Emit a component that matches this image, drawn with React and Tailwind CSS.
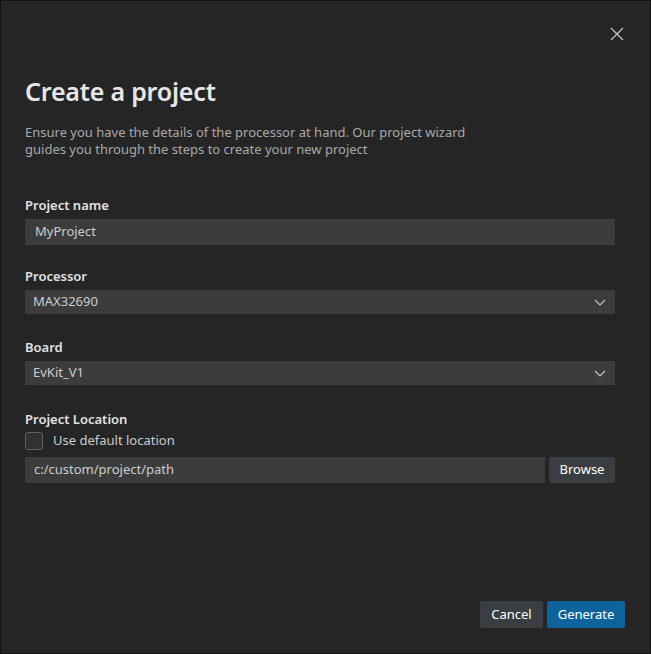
import React from 'react';

const font = { fontFamily: '"Segoe UI", "Noto Sans", "Open Sans", sans-serif' };

function Chevron() {
    return (
        <svg width="12" height="7" viewBox="0 0 12 7" fill="none" className="shrink-0">
            <path d="M1 1l5 5 5-5" stroke="#c5c5c5" strokeWidth="1.2" />
        </svg>
    );
}

function Field({ label, className, children }) {
    return (
        <div className={'flex flex-col ' + (className || '')}>
            <label className="text-[13px] font-semibold text-[#e2e2e2] leading-[18px] mb-[5px]">{label}</label>
            {children}
        </div>
    );
}

function SelectBox({ value }) {
    return (
        <div className="h-6 bg-[#3c3c3c] flex items-center justify-between pl-2 pr-[9px] text-[13px] text-[#cccccc]">
            <span>{value}</span>
            <Chevron />
        </div>
    );
}

export default function App() {
    return (
        <div
            className="w-[651px] h-[654px] bg-[#252526] border border-[#141414] flex flex-col relative overflow-hidden"
            style={font}
        >
            {/* close */}
            <button className="absolute top-[25px] left-[608px] w-[15px] h-[15px] flex items-center justify-center">
                <svg width="14" height="14" viewBox="0 0 14 14" fill="none">
                    <path d="M1 1l12 12M13 1L1 13" stroke="#c5c5c5" strokeWidth="1.3" />
                </svg>
            </button>

            <div className="px-6 pt-[73px] w-[638px]">
                <h1 className="text-[25px] font-semibold text-[#e7e7e7] leading-[34px] tracking-[-0.2px]">Create a project</h1>
                <p className="mt-[16px] text-[13px] leading-[17px] text-[#a9a9a9] w-[470px]">
                    Ensure you have the details of the processor at hand. Our project wizard guides you through the steps to create your new project
                </p>

                <div className="mt-[38px] flex flex-col">
                    <Field label="Project name">
                        <div className="h-[26px] bg-[#3c3c3c] flex items-center px-[10px] text-[13px] text-[#cccccc]">MyProject</div>
                    </Field>
                    <Field label="Processor" className="mt-[22px]">
                        <SelectBox value="MAX32690" />
                    </Field>
                    <Field label="Board" className="mt-[24px]">
                        <SelectBox value="EvKit_V1" />
                    </Field>
                    <div className="mt-[25px] flex flex-col">
                        <label className="text-[13px] font-semibold text-[#e2e2e2] leading-[18px]">Project Location</label>
                        <label className="mt-[4px] h-[18px] flex items-center gap-[10px] text-[13px] text-[#cccccc]">
                            <span className="w-[18px] h-[18px] rounded-[3px] border border-[#5f5f5f] bg-[#313131]" />
                            Use default location
                        </label>
                        <div className="mt-[7px] flex gap-1">
                            <div className="flex-1 h-[26px] bg-[#3c3c3c] flex items-center px-[9px] text-[13px] text-[#cccccc]">c:/custom/project/path</div>
                            <button className="w-[66px] h-[26px] bg-[#3a3d41] rounded-[2px] text-[13px] text-[#ffffff]">Browse</button>
                        </div>
                    </div>
                </div>
            </div>

            <div className="mt-auto flex justify-end gap-1 pr-[25px] pb-[25px]">
                <button className="h-[27px] w-[63px] bg-[#3a3d41] rounded-[2px] text-[13px] text-white">Cancel</button>
                <button className="h-[27px] w-[78px] bg-[#0e639c] rounded-[2px] text-[13px] text-white">Generate</button>
            </div>
        </div>
    );
}
